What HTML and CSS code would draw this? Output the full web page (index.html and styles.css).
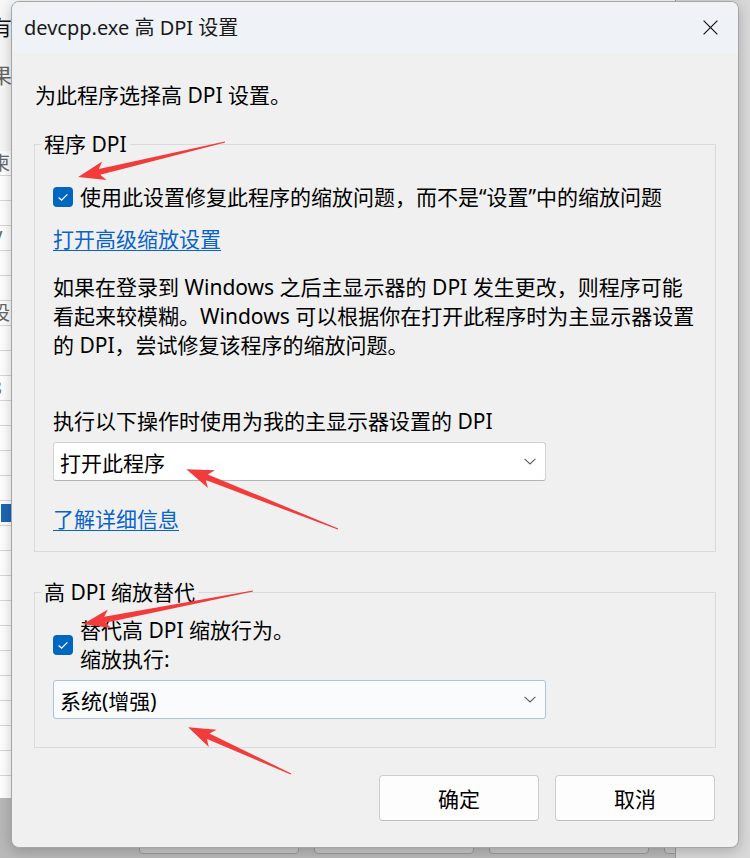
FILE: index.html
```html
<!DOCTYPE html>
<html lang="zh-CN">
<head>
<meta charset="utf-8">
<title>devcpp.exe 高 DPI 设置</title>
<link rel="stylesheet" href="styles.css">
</head>
<body>
<div class="desktop">
  <div class="backwin">
    <div class="bw-head">
      <div class="bw-h1">有</div>
      <div class="bw-h2">果</div>
      <div class="bw-h3">·</div>
    </div>
    <div class="bw-list">
      <div class="bw-row">柬</div>
      <div class="bw-row"></div>
      <div class="bw-row"></div>
      <div class="bw-row">V</div>
      <div class="bw-row"></div>
      <div class="bw-row"></div>
      <div class="bw-row">设</div>
      <div class="bw-row"></div>
      <div class="bw-row"></div>
      <div class="bw-row">8</div>
      <div class="bw-row"></div>
      <div class="bw-row"></div>
      <div class="bw-row"></div>
      <div class="bw-row"></div>
      <div class="bw-row"><span class="bw-check"></span></div>
      <div class="bw-row"></div>
      <div class="bw-row"></div>
      <div class="bw-row"></div>
      <div class="bw-row"></div>
      <div class="bw-row"></div>
      <div class="bw-row"></div>
      <div class="bw-row"></div>
      <div class="bw-row"></div>
      <div class="bw-row"></div>
      <div class="bw-row"></div>
    </div>
    <div class="bw-foot">
      <span class="bw-btn"></span>
      <span class="bw-btn"></span>
      <span class="bw-btn"></span>
      <span class="bw-btn"></span>
    </div>
  </div>

  <div class="dialog">
    <div class="titlebar">
      <span class="title">devcpp.exe 高 DPI 设置</span>
      <svg class="close" width="15" height="15" viewBox="0 0 15 15"><path d="M0.6 0.6 L14.4 14.4 M14.4 0.6 L0.6 14.4" stroke="#1b1b1b" stroke-width="1.25" fill="none"/></svg>
    </div>
    <div class="body">
      <p class="intro">为此程序选择高 DPI 设置。</p>

      <fieldset class="group g1">
        <legend>程序 DPI</legend>
        <div class="check-row">
          <span class="checkbox"><svg width="20" height="20" viewBox="0 0 20 20"><path d="M5.6 10.4 L8.6 13.2 L14.4 7.4" fill="none" stroke="#fff" stroke-width="1.3"/></svg></span>
          <span class="check-text">使用此设置修复此程序的缩放问题，而不是“设置”中的缩放问题</span>
        </div>
        <a class="link l1" href="#">打开高级缩放设置</a>
        <p class="para">如果在登录到 Windows 之后主显示器的 DPI 发生更改，则程序可能<br>看起来较模糊。Windows 可以根据你在打开此程序时为主显示器设置<br>的 DPI，尝试修复该程序的缩放问题。</p>
        <div class="label">执行以下操作时使用为我的主显示器设置的 DPI</div>
        <div class="select s1">
          <span>打开此程序</span>
          <svg width="12" height="7" viewBox="0 0 12 7"><path d="M0.6 0.8 L6 6 L11.4 0.8" fill="none" stroke="#5c5c5c" stroke-width="1.1"/></svg>
        </div>
        <a class="link l2" href="#">了解详细信息</a>
      </fieldset>

      <fieldset class="group g2">
        <legend>高 DPI 缩放替代</legend>
        <div class="check-row two">
          <span class="checkbox"><svg width="20" height="20" viewBox="0 0 20 20"><path d="M5.6 10.4 L8.6 13.2 L14.4 7.4" fill="none" stroke="#fff" stroke-width="1.3"/></svg></span>
          <span class="check-text">替代高 DPI 缩放行为。<br>缩放执行:</span>
        </div>
        <div class="select s2">
          <span>系统(增强)</span>
          <svg width="12" height="7" viewBox="0 0 12 7"><path d="M0.6 0.8 L6 6 L11.4 0.8" fill="none" stroke="#5c5c5c" stroke-width="1.1"/></svg>
        </div>
      </fieldset>

      <div class="buttons">
        <button class="btn">确定</button>
        <button class="btn">取消</button>
      </div>
    </div>
  </div>

  <svg class="arrows" width="750" height="858" viewBox="0 0 750 858">
    <g fill="#f23c3c">
      <polygon transform="translate(225,142) rotate(166.6)" points="0,-0.6 129,-3 124,-9.5 151,0 124,9.5 129,3 0,0.6"/>
      <polygon transform="translate(338,529) rotate(-158.5)" points="0,-0.6 141,-3 136,-9.5 163,0 136,9.5 141,3 0,0.6"/>
      <polygon transform="translate(253,591) rotate(169)" points="0,-0.6 151,-3 146,-9.5 173,0 146,9.5 151,3 0,0.6"/>
      <polygon transform="translate(291,774) rotate(-155.5)" points="0,-0.6 91,-3 86,-9.5 113,0 86,9.5 91,3 0,0.6"/>
    </g>
  </svg>
</div>
</body>
</html>
```

FILE: styles.css
```css
* { box-sizing: border-box; }

html, body {
  margin: 0;
  padding: 0;
}

body {
  width: 750px;
  height: 858px;
  overflow: hidden;
  background: #d9d9d9;
  font-family: "Noto Sans", "Noto Sans CJK SC", sans-serif;
  color: #000;
}

.desktop {
  position: relative;
  width: 750px;
  height: 858px;
  overflow: hidden;
}

/* background window (only edges visible) */
.backwin {
  position: absolute;
  left: -40px;
  top: -1px;
  width: 716px;
  height: 880px;
  background: #ffffff;
  border: 1px solid #9c9c9c;
  display: flex;
  flex-direction: column;
}

.bw-head {
  flex: none;
  height: 151px;
  padding-left: 30px;
  font-size: 21px;
  line-height: 26px;
  background: #f7f7f7;
}

.bw-h1 { margin-top: 14px; color: #111; }
.bw-h2 { margin-top: 22px; color: #666; }
.bw-h3 { color: #444; }

.bw-list {
  flex: none;
  height: 647px;
  display: flex;
  flex-direction: column;
  overflow: hidden;
}

.bw-row {
  flex: none;
  height: 25px;
  border-bottom: 1px solid #d8d8d8;
  padding-left: 30px;
  font-size: 19px;
  line-height: 24px;
  color: #666;
}

.bw-check {
  display: inline-block;
  margin-left: 10px;
  margin-top: 3px;
  width: 18px;
  height: 18px;
  background: #1b66b8;
}

.bw-foot {
  flex: 1;
  background: #b9b9b9;
  display: flex;
  gap: 15px;
  padding-left: 178px;
  padding-top: 12px;
  overflow: hidden;
}

.bw-btn {
  flex: none;
  width: 160px;
  height: 44px;
  background: #c9c9c9;
  border: 1px solid #9c9c9c;
  border-radius: 4px;
}

/* dialog */
.dialog {
  position: absolute;
  left: 11px;
  top: 1px;
  width: 728px;
  height: 847px;
  background: #f0f0f0;
  border: 1px solid #a5a5a5;
  border-radius: 8px;
  overflow: hidden;
  box-shadow: 0 3px 14px rgba(0, 0, 0, 0.22);
  display: flex;
  flex-direction: column;
}

.titlebar {
  flex: none;
  height: 51px;
  background: #eff2f7;
  display: flex;
  align-items: center;
  justify-content: space-between;
  padding: 0 20px 0 12px;
}

.title {
  font-size: 20px;
  line-height: 28px;
  color: #1a1a1a;
}

.close { display: block; }

.body {
  flex: 1;
  display: flex;
  flex-direction: column;
  padding: 28px 22px 0 22px;
}

.intro {
  margin: 0;
  padding-left: 1px;
  font-size: 21px;
  line-height: 28px;
}

.group {
  margin: 0;
  min-width: 0;
  border: 1px solid #dadada;
  padding: 0 0 0 18px;
}

.group legend {
  padding: 0 3px;
  margin-left: -12px;
  font-size: 21px;
  line-height: 24px;
}

.g1 {
  margin-top: 23px;
  padding-top: 27px;
  padding-bottom: 18px;
}

.g2 {
  margin-top: 28px;
  padding-top: 12px;
  padding-bottom: 28px;
}

.check-row {
  display: flex;
  align-items: center;
  gap: 7px;
  font-size: 21px;
  line-height: 28px;
}

.check-row.two { line-height: 29px; }

.checkbox {
  flex: none;
  width: 20px;
  height: 20px;
  border-radius: 4px;
  background: #0067c0;
}

.checkbox svg { display: block; }

.check-text { white-space: nowrap; }

.link {
  display: block;
  width: fit-content;
  font-size: 21px;
  line-height: 28px;
  color: #0a64c8;
  text-decoration: underline;
  text-underline-offset: 3px;
  text-decoration-thickness: 1px;
}

.l1 { margin-top: 14px; }
.l2 { margin-top: 24px; }

.para {
  margin: 20px 0 0 0;
  font-size: 21px;
  line-height: 29px;
  white-space: nowrap;
}

.label {
  margin-top: 47px;
  font-size: 21px;
  line-height: 28px;
}

.select {
  width: 493px;
  height: 39px;
  display: flex;
  align-items: center;
  justify-content: space-between;
  padding: 0 9px 0 6px;
  font-size: 21px;
  border-radius: 3px;
}

.select svg { display: block; }

.s1 {
  margin-top: 7px;
  background: #ffffff;
  border: 1px solid #d2d2d2;
  border-bottom-color: #b4b4b4;
}

.s2 {
  margin-top: 6px;
  background: #f9fbfd;
  border: 1px solid #afc3d8;
}

.buttons {
  margin-top: 27px;
  display: flex;
  justify-content: flex-end;
  gap: 16px;
  padding-right: 1px;
}

.btn {
  width: 160px;
  height: 46px;
  background: #fdfdfd;
  border: 1px solid #cdcdcd;
  border-bottom-color: #bdbdbd;
  border-radius: 4px;
  font-family: "Noto Sans", "Noto Sans CJK SC", sans-serif;
  font-size: 21px;
  color: #000;
  padding: 0;
}

.arrows {
  position: absolute;
  left: 0;
  top: 0;
  pointer-events: none;
}
```
